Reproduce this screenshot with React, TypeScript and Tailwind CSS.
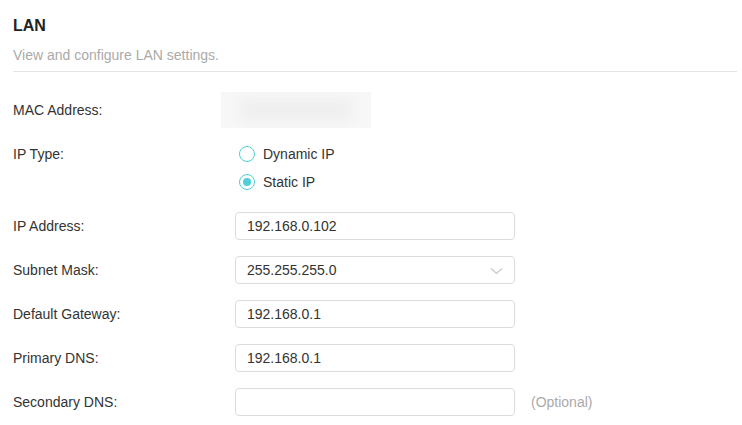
import React from "react";

const font = { fontFamily: '"Liberation Sans", Arial, sans-serif' };

function Field({ label, value, select, hint }: { label: string; value: string; select?: boolean; hint?: string }) {
  return (
    <div className="flex items-center h-[28px]">
      <div className="w-[222px] text-[14px] text-[#333]">{label}</div>
      <div className="relative w-[280px] h-[28px] border border-[#dcdcdc] rounded-[4px] bg-white flex items-center px-[11px] text-[14px] text-[#333]">
        {value}
        {select && (
          <svg className="absolute right-[11px] top-[10px]" width="13" height="8" viewBox="0 0 13 8" fill="none">
            <path d="M1 1.5L6.5 6.5L12 1.5" stroke="#c8c8c8" strokeWidth="1.2" />
          </svg>
        )}
      </div>
      {hint && <span className="ml-[16px] text-[14px] text-[#aaa]">{hint}</span>}
    </div>
  );
}

function Radio({ label, checked }: { label: string; checked?: boolean }) {
  return (
    <div className="flex items-center h-[20px]">
      <span className="w-[16px] h-[16px] rounded-full border-[1.5px] border-[#4fcfd8] flex items-center justify-center">
        {checked && <span className="w-[8px] h-[8px] rounded-full bg-[#4fcfd8]" />}
      </span>
      <span className="ml-[8px] text-[14px] text-[#333]">{label}</span>
    </div>
  );
}

export default function App() {
  return (
    <div className="w-[742px] h-[425px] bg-white overflow-hidden pl-[13px] pr-[5px]" style={font}>
      <div className="pt-[17px] text-[16px] leading-[18px] font-bold text-[#222]">LAN</div>
      <div className="mt-[12px] text-[14px] leading-[16px] text-[#aaa]">View and configure LAN settings.</div>
      <div className="mt-[8px] h-px bg-[#e4e4e4]" />

      <div className="mt-[20px] flex items-center h-[36px]">
        <div className="w-[208px] text-[14px] text-[#333]">MAC Address:</div>
        <div className="relative w-[150px] h-[36px] bg-[#f7f7f7] overflow-hidden">
          <div className="absolute left-[20px] top-[8px] w-[110px] h-[20px] bg-[#eeeeee] blur-[6px]" />
        </div>
      </div>

      <div className="mt-[16px] flex">
        <div className="w-[226px] h-[20px] flex items-center text-[14px] text-[#333]">IP Type:</div>
        <div className="flex flex-col gap-[8px]">
          <Radio label="Dynamic IP" />
          <Radio label="Static IP" checked />
        </div>
      </div>

      <div className="mt-[20px] flex flex-col gap-[16px]">
        <Field label="IP Address:" value="192.168.0.102" />
        <Field label="Subnet Mask:" value="255.255.255.0" select />
        <Field label="Default Gateway:" value="192.168.0.1" />
        <Field label="Primary DNS:" value="192.168.0.1" />
        <Field label="Secondary DNS:" value="" hint="(Optional)" />
      </div>
    </div>
  );
}
